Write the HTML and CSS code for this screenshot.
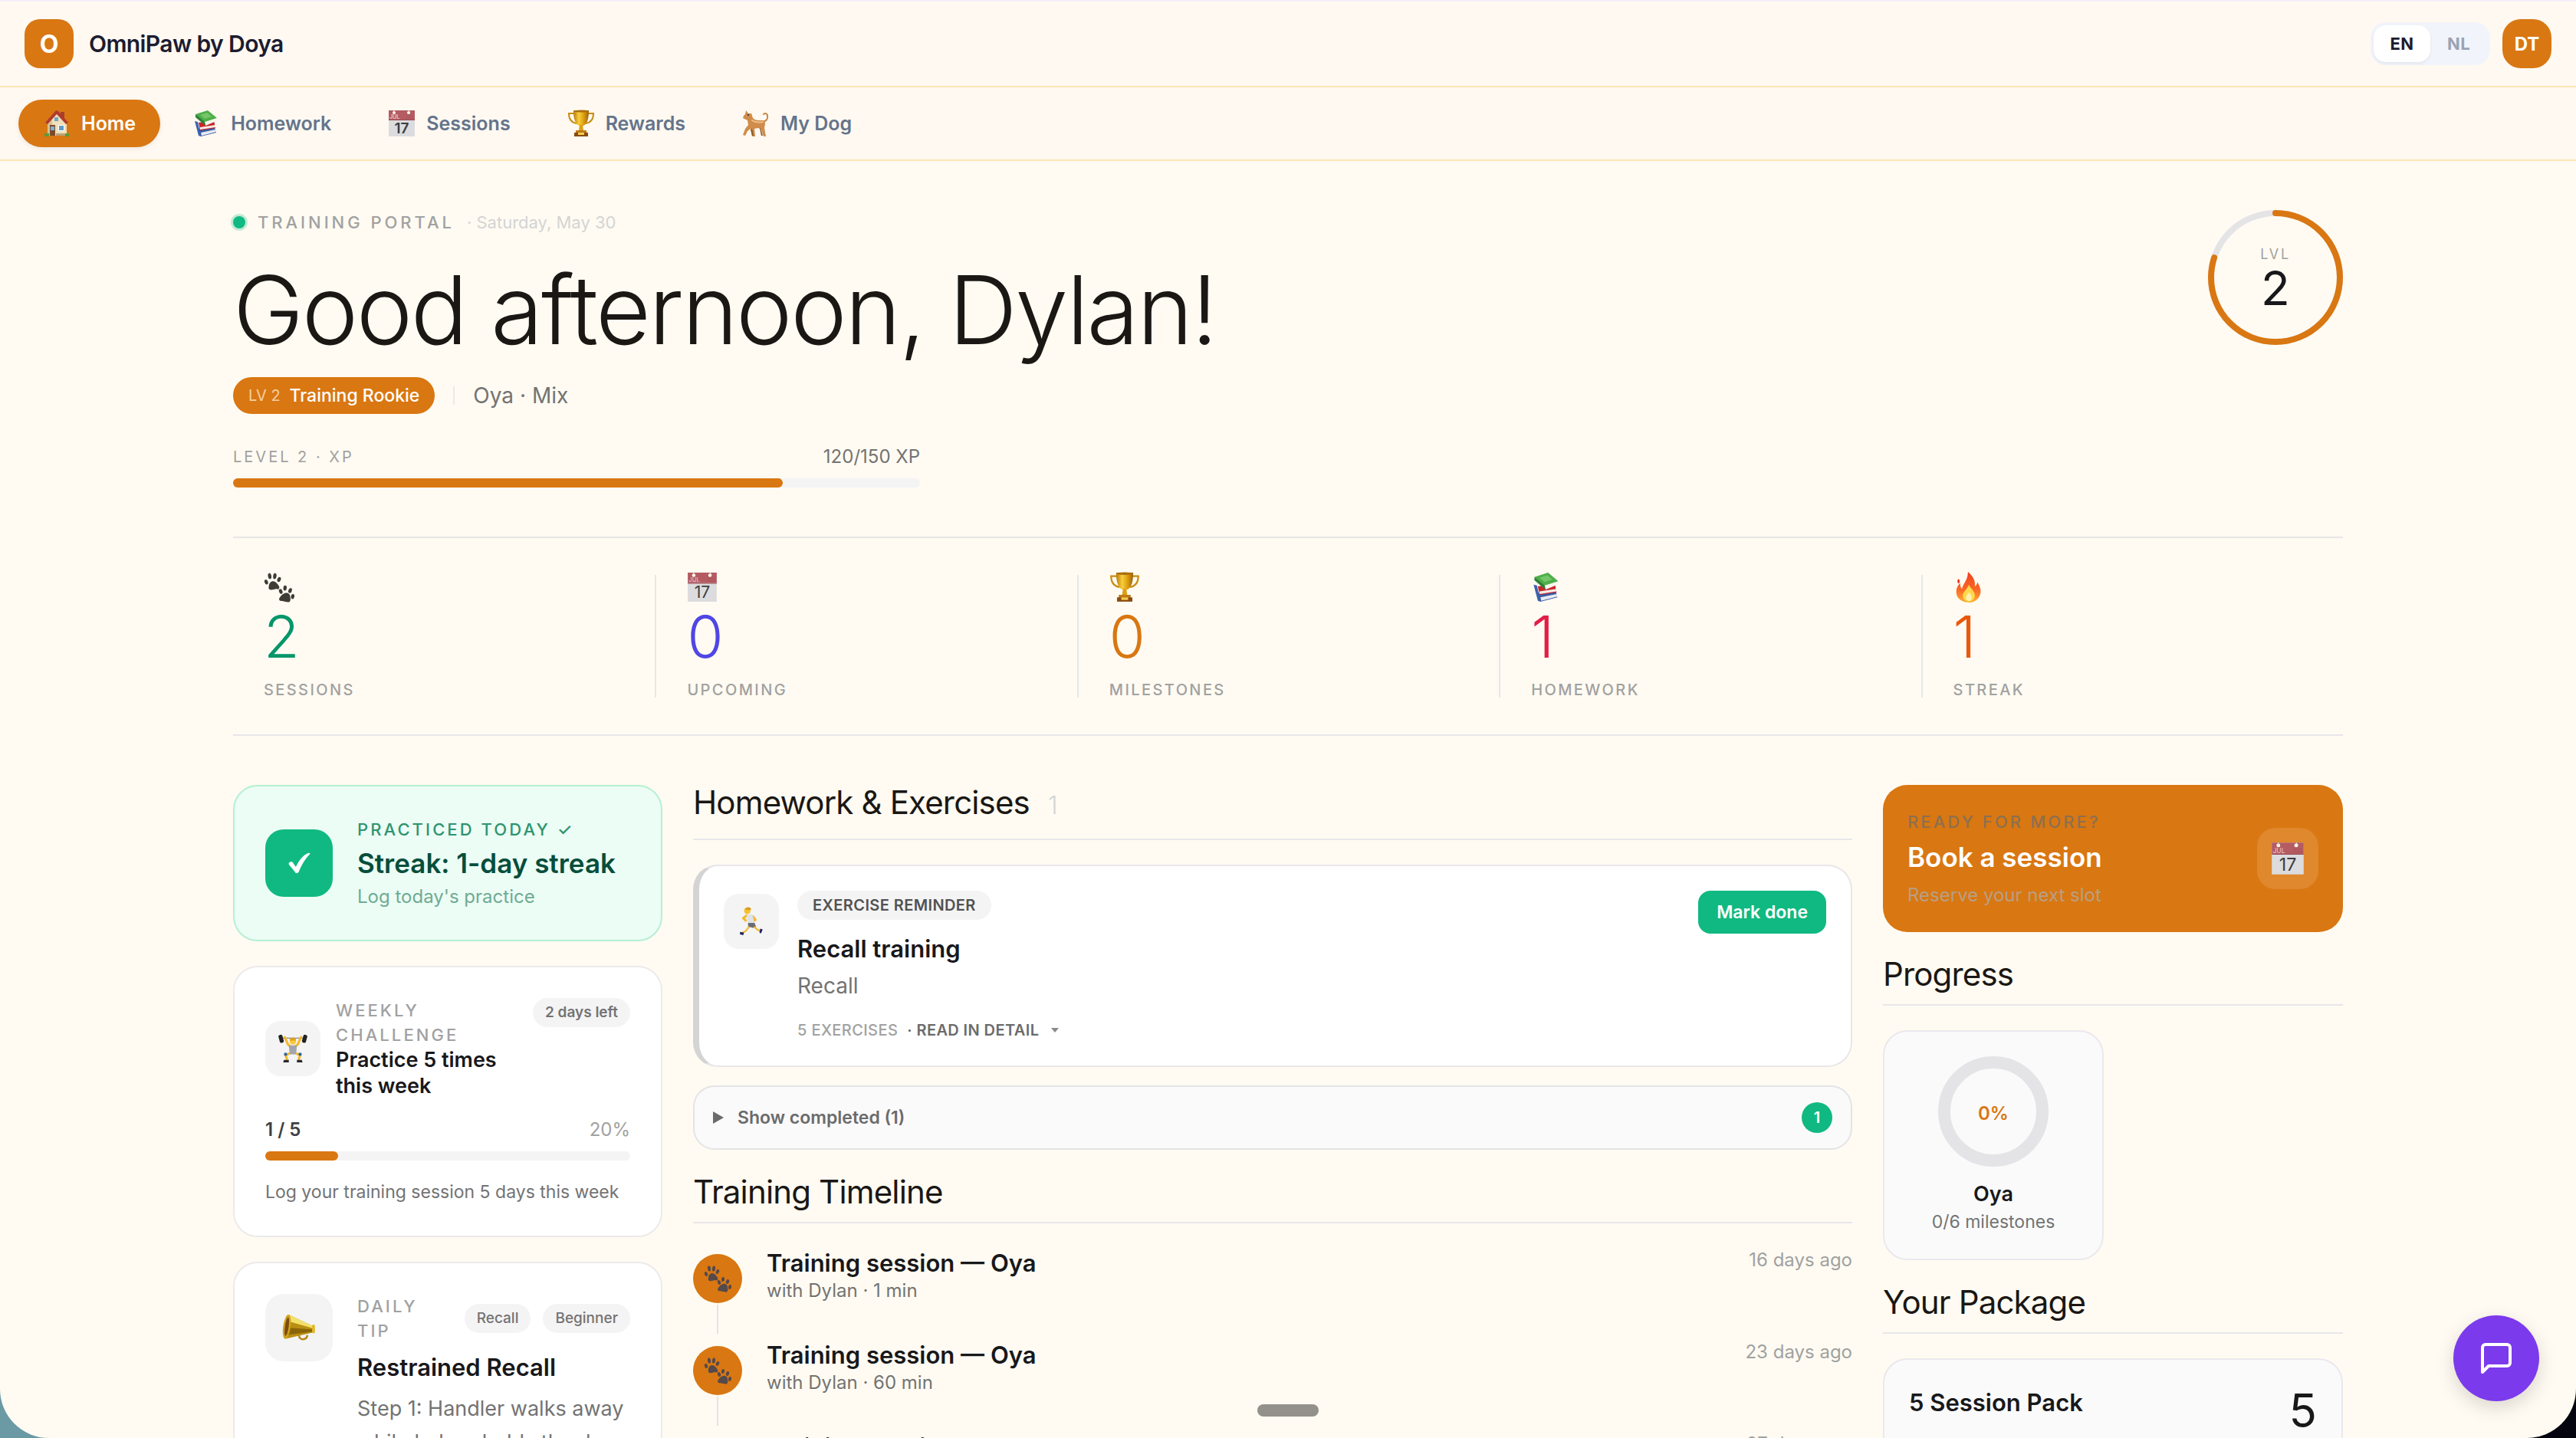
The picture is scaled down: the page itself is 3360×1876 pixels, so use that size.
FILE: index.html
```html
<!DOCTYPE html>
<html lang="en">
<head>
    <meta charset="UTF-8">
    <meta name="viewport" content="width=device-width, initial-scale=1.0">
    <title>OmniPaw by Doya</title>
    <link rel="stylesheet" href="styles.css">
</head>
<body>

    <!-- Icon set -->
    <svg class="icon-defs" aria-hidden="true">
        <defs>
            <linearGradient id="gold" x1="0" x2="1" y1="0" y2="0">
                <stop offset="0" stop-color="#b8790a"/>
                <stop offset=".35" stop-color="#f7cf3c"/>
                <stop offset=".65" stop-color="#e0a012"/>
                <stop offset="1" stop-color="#9c6206"/>
            </linearGradient>
            <linearGradient id="flame" x1="0" x2="0" y1="0" y2="1">
                <stop offset="0" stop-color="#f0401f"/>
                <stop offset=".6" stop-color="#fb6a26"/>
                <stop offset="1" stop-color="#ffb02e"/>
            </linearGradient>
        </defs>
        <symbol id="i-house" viewBox="0 0 36 36">
            <path d="M23 3h5v9h-5z" fill="#a5402f"/>
            <path d="M6 16 18 4l13 13v17H6z" fill="#f0dfb8"/>
            <path d="M6 16 12 10v24H6z" fill="#d9c193"/>
            <path d="M17 1 3 17l3 2L18 6l12 13 3-2L20 2z" fill="#b23a2c"/>
            <path d="M9 20h7v14H9z" fill="#7a4a2c"/>
            <path d="M10 22h5v5h-5z" fill="#7fb0cf"/>
            <path d="M20 20h8v8h-8z" fill="#fff"/>
            <path d="M21 21h6v6h-6z" fill="#5f9bc6"/>
            <path d="M15 10h5v5h-5z" fill="#6fa3c7"/>
            <path d="M2 31h6v4H2zM29 31h5v4h-5z" fill="#5c9a3b"/>
            <path d="M17 31h12v3H17z" fill="#b9a27b"/>
        </symbol>
        <symbol id="i-books" viewBox="0 0 36 36">
            <path d="M6 25 29 23l2 7-20 5z" fill="#3b5ba3"/>
            <path d="M11 30 30 26l1 3-19 5z" fill="#e7eaf2"/>
            <path d="M3 15l4 1 4 19-3-1z" fill="#3c62b0"/>
            <path d="M8 17 28 14l2 10-20 3z" fill="#c9252b"/>
            <path d="M10 23 30 20v3l-20 3z" fill="#f4ece6"/>
            <path d="M4 6 20 1l12 10-16 7z" fill="#4fae4a"/>
            <path d="M16 16 32 11l-1 4-14 6z" fill="#f6f6ee"/>
            <path d="M4 6l12 10 1 5L4 10z" fill="#2c8035"/>
            <path d="M10 7l9-3 6 5-9 3z" fill="#73c768"/>
        </symbol>
        <symbol id="i-calendar" viewBox="0 0 36 36">
            <path d="M1 1h34v34H1z" fill="#dcdcde"/>
            <path d="M1 1h34v12H1z" fill="#b45c62"/>
            <path d="M1 13h34v1H1z" fill="#9b4b52"/>
            <circle cx="8" cy="4" r="2" fill="#fffbf2"/>
            <circle cx="27" cy="4" r="2" fill="#fffbf2"/>
            <path d="M8 1v3M27 1l2 3" stroke="#e7dcd4" stroke-width="1"/>
            <text x="2" y="12" font-size="7" fill="#ecc9c9" font-family="Inter, sans-serif">JUL</text>
            <path d="M24 8h9M24 11h9" stroke="#a04d55" stroke-width="1" stroke-dasharray="1 1"/>
            <text x="18" y="31" font-size="19" text-anchor="middle" fill="#3c3c42" font-family="Inter, sans-serif">17</text>
        </symbol>
        <symbol id="i-trophy" viewBox="0 0 36 36">
            <path d="M9 5H2c0 8 4 12 10 13M27 5h7c0 8-4 12-10 13" fill="none" stroke="#c98c10" stroke-width="2"/>
            <path d="M8 1h20c0 11-2 17-7 20h-6C10 18 8 12 8 1z" fill="url(#gold)"/>
            <ellipse cx="18" cy="2" rx="10" ry="1.500" fill="#a86f08"/>
            <path d="M16 20h4l1 7h-6z" fill="#dba016"/>
            <path d="M11 27h14v4H11z" fill="#c07a16"/>
            <path d="M9 30h18v5H9z" fill="#8a4a12"/>
            <path d="M14 30h8v3h-8z" fill="#f3cd52"/>
        </symbol>
        <symbol id="i-dog" viewBox="0 0 36 36">
            <path d="M26 16c5 0 8-4 7-8 0-3-4-4-5-2" fill="none" stroke="#c98748" stroke-width="2" stroke-linecap="round"/>
            <path d="M5 1l3 4h4l2 6c2 2 4 3 8 3h4c3 0 4 2 4 5l-1 5 2 11h-3l-3-9-4-2-5 1 1 10h-4l-2-10-4 3-3 6-3-1 3-8 4-5-1-6-6-3 1-3 2-2z" fill="#cf8c4a"/>
            <path d="M13 14c4 3 9 3 14 2" fill="none" stroke="#efbf87" stroke-width="2" stroke-linecap="round"/>
            <circle cx="8" cy="7" r="1" fill="#33241a"/>
            <path d="M24 24l3 10h-2l-2-9z" fill="#8f5a2a"/>
            <path d="M13 25l2 9h-2l-2-8z" fill="#8f5a2a"/>
        </symbol>
        <symbol id="i-paws" viewBox="0 0 36 36">
            <g fill="currentColor">
                <path d="M11 11c3 0 6 4 7 6 1 3-1 4-3 3-2 0-3 1-5 1-3 1-5-1-4-4 0-3 2-6 5-6z"/>
                <ellipse cx="3" cy="12" rx="2" ry="3" transform="rotate(-20 3 12)"/>
                <ellipse cx="7" cy="5" rx="2" ry="3.500" transform="rotate(-8 7 5)"/>
                <ellipse cx="13" cy="5" rx="2" ry="3.500" transform="rotate(8 13 5)"/>
                <ellipse cx="18" cy="9" rx="2" ry="3" transform="rotate(24 18 9)"/>
                <path d="M25 25c3-1 6 1 6 4 0 2 1 3 0 5-1 3-4 1-6 1-3-1-7 0-7-3 1-3 4-6 7-7z"/>
                <ellipse cx="20" cy="23" rx="2" ry="3" transform="rotate(-20 20 23)"/>
                <ellipse cx="25" cy="19" rx="2" ry="3" transform="rotate(5 25 19)"/>
                <ellipse cx="31" cy="22" rx="2" ry="3" transform="rotate(20 31 22)"/>
                <ellipse cx="34" cy="29" rx="2" ry="3" transform="rotate(10 34 29)"/>
            </g>
        </symbol>
        <symbol id="i-fire" viewBox="0 0 36 36">
            <path d="M17 0c7 6 9 12 8 17 2-1 3-3 3-5 5 8 5 14 1 19-3 3-6 5-11 5S8 34 5 30c-3-6-2-12 3-17 0 3 0 5 2 7 1-6 7-10 7-20z" fill="url(#flame)"/>
            <path d="M6 8c2 2 2 4 0 6-2-2-2-4 0-6z" fill="#f0401f"/>
            <path d="M18 15c2 5 8 8 7 14-1 4-4 6-7 6s-7-2-7-7 5-7 7-13z" fill="#ffd84d"/>
            <path d="M18 24c3 3 4 5 3 8-1 3-5 3-6 0s1-5 3-8z" fill="#fff3b0"/>
        </symbol>
        <symbol id="i-lifter" viewBox="0 0 36 36">
            <path d="M3 5h30" stroke="#77777a" stroke-width="1"/>
            <rect x="1" y="1" width="5" height="10" rx="2" fill="#222" transform="rotate(-15 3 6)"/>
            <rect x="30" y="1" width="5" height="10" rx="2" fill="#222" transform="rotate(15 33 6)"/>
            <path d="M8 4l4 9 4 3M28 4l-4 9-4 3" fill="none" stroke="#f2b92e" stroke-width="3" stroke-linecap="round" stroke-linejoin="round"/>
            <circle cx="18" cy="9" r="4" fill="#fbc93d"/>
            <path d="M14 8c0-5 8-5 8 0z" fill="#e0a11c"/>
            <path d="M13 14h10l-1 11h-8z" fill="#a3a5ab"/>
            <path d="M14 24l-5 2 2 6M22 24l5 2-2 6" fill="none" stroke="#f2b92e" stroke-width="3" stroke-linejoin="round"/>
            <circle cx="9" cy="25" r="2" fill="#2d63a6"/>
            <circle cx="27" cy="25" r="2" fill="#2d63a6"/>
            <path d="M7 32h6v3H6zM23 32h6l1 3h-7z" fill="#2a2a2c"/>
        </symbol>
        <symbol id="i-megaphone" viewBox="0 0 36 36">
            <path d="M18 26c0 6 8 6 9 0" fill="none" stroke="#b98412" stroke-width="2"/>
            <path d="M7 4 34 17v6L3 30z" fill="#b98f12"/>
            <path d="M7 4 34 17v2L6 11z" fill="#f3e06a"/>
            <path d="M5 18l29 2v2L4 26z" fill="#8b6508"/>
            <ellipse cx="5" cy="17" rx="4" ry="13" fill="#d0a51c" transform="rotate(8 5 17)"/>
            <ellipse cx="5" cy="17" rx="2" ry="10" fill="#7c4b10" transform="rotate(8 5 17)"/>
            <rect x="32" y="15" width="3" height="9" rx="1" fill="#e2b927"/>
        </symbol>
        <symbol id="i-runner" viewBox="0 0 36 36">
            <circle cx="13" cy="5" r="4" fill="#f7c02f"/>
            <path d="M10 3c2-4 7-3 8 0l-2 1z" fill="#d99a1c"/>
            <path d="M12 11l-4 3 3 3M20 12l3 4-4 3" fill="none" stroke="#f2b92e" stroke-width="3" stroke-linecap="round" stroke-linejoin="round"/>
            <path d="M12 10l7-1 3 11-8 1z" fill="#dfe2e8"/>
            <path d="M14 20h8l2 5-4 1-3-1-3 1z" fill="#6b6d72"/>
            <path d="M15 25l-4 5-4 2M22 25l3 3 4 2" fill="none" stroke="#f2b92e" stroke-width="2" stroke-linecap="round"/>
            <path d="M4 31l5 1-1 3-4-1zM28 32l1-5 3 1-2 5z" fill="#23235c"/>
        </symbol>
        <symbol id="i-check" viewBox="0 0 36 36">
            <path d="M2 18c2-3 6-3 7 0l4 6C18 14 24 5 33 2c2 0 3 1 2 2-7 7-13 17-17 27-2 4-5 4-7 0L2 20z" fill="#fff"/>
        </symbol>
        <symbol id="i-chat" viewBox="0 0 24 24">
            <path d="M21 15a2 2 0 0 1-2 2H7l-4 4V5a2 2 0 0 1 2-2h14a2 2 0 0 1 2 2z" fill="none" stroke="#fff" stroke-width="2" stroke-linecap="round" stroke-linejoin="round"/>
        </symbol>
    </svg>

    <div class="screen">

        <header class="topbar">
            <a class="brand" href="#">
                <span class="brand-logo">O</span>
                <span class="brand-name">OmniPaw by Doya</span>
            </a>
            <div class="topbar-right">
                <div class="lang-switch">
                    <button type="button" class="lang active">EN</button>
                    <button type="button" class="lang">NL</button>
                </div>
                <button type="button" class="avatar">DT</button>
            </div>
        </header>

        <nav class="tabs">
            <a class="tab active" href="#"><svg class="icon"><use href="#i-house"/></svg>Home</a>
            <a class="tab" href="#"><svg class="icon"><use href="#i-books"/></svg>Homework</a>
            <a class="tab" href="#"><svg class="icon"><use href="#i-calendar"/></svg>Sessions</a>
            <a class="tab" href="#"><svg class="icon"><use href="#i-trophy"/></svg>Rewards</a>
            <a class="tab" href="#"><svg class="icon"><use href="#i-dog"/></svg>My Dog</a>
        </nav>

        <main class="container">

            <section class="hero">
                <div class="hero-text">
                    <div class="hero-eyebrow">
                        <span class="dot"></span>
                        <span class="label">Training Portal</span>
                        <span class="hero-date">· Saturday, May 30</span>
                    </div>
                    <h1>Good afternoon, Dylan!</h1>
                    <div class="hero-meta">
                        <span class="rank"><span class="rank-level">LV 2</span>Training Rookie</span>
                        <span class="meta-divider"></span>
                        <span class="hero-dog">Oya · Mix</span>
                    </div>
                    <div class="xp">
                        <div class="xp-row">
                            <span class="xp-label">Level 2 · XP</span>
                            <span class="xp-value">120/150 XP</span>
                        </div>
                        <div class="bar"><div class="bar-fill" style="width: 80%"></div></div>
                    </div>
                </div>
                <div class="level-ring">
                    <svg viewBox="0 0 176 176">
                        <circle cx="88" cy="88" r="84" fill="none" stroke="#e4e4e7" stroke-width="8"/>
                        <circle cx="88" cy="88" r="84" fill="none" stroke="#d97712" stroke-width="8" stroke-linecap="round" pathLength="100" stroke-dasharray="80 100" transform="rotate(-90 88 88)"/>
                    </svg>
                    <div class="level-text">
                        <span class="level-label">LVL</span>
                        <span class="level-number">2</span>
                    </div>
                </div>
            </section>

            <section class="stats">
                <div class="stat green">
                    <svg class="icon"><use href="#i-paws"/></svg>
                    <strong>2</strong>
                    <span>Sessions</span>
                </div>
                <div class="stat indigo">
                    <svg class="icon"><use href="#i-calendar"/></svg>
                    <strong>0</strong>
                    <span>Upcoming</span>
                </div>
                <div class="stat amber">
                    <svg class="icon"><use href="#i-trophy"/></svg>
                    <strong>0</strong>
                    <span>Milestones</span>
                </div>
                <div class="stat rose">
                    <svg class="icon"><use href="#i-books"/></svg>
                    <strong>1</strong>
                    <span>Homework</span>
                </div>
                <div class="stat orange">
                    <svg class="icon"><use href="#i-fire"/></svg>
                    <strong>1</strong>
                    <span>Streak</span>
                </div>
            </section>

            <div class="columns">

                <!-- Left column -->
                <div class="column">
                    <a class="card streak" href="#">
                        <span class="tile tile-green"><svg class="icon"><use href="#i-check"/></svg></span>
                        <span class="card-text">
                            <span class="label">Practiced today ✓</span>
                            <span class="streak-title">Streak: 1-day streak</span>
                            <span class="streak-sub">Log today's practice</span>
                        </span>
                    </a>

                    <article class="card challenge">
                        <div class="challenge-head">
                            <span class="tile tile-small"><svg class="icon"><use href="#i-lifter"/></svg></span>
                            <div class="card-text">
                                <span class="label">Weekly challenge</span>
                                <h3>Practice 5 times this week</h3>
                            </div>
                            <span class="badge strong">2 days left</span>
                        </div>
                        <div class="challenge-row">
                            <span class="count">1 / 5</span>
                            <span class="percent">20%</span>
                        </div>
                        <div class="bar"><div class="bar-fill" style="width: 20%"></div></div>
                        <p>Log your training session 5 days this week</p>
                    </article>

                    <article class="card tip">
                        <span class="tile"><svg class="icon"><use href="#i-megaphone"/></svg></span>
                        <div class="card-text">
                            <div class="tip-head">
                                <span class="label">Daily tip</span>
                                <span class="badge">Recall</span>
                                <span class="badge">Beginner</span>
                            </div>
                            <h3>Restrained Recall</h3>
                            <p>Step 1: Handler walks away while helper holds the dog.</p>
                        </div>
                    </article>
                </div>

                <!-- Middle column -->
                <div class="column">
                    <section>
                        <div class="section-head roomy">
                            <h2>Homework &amp; Exercises</h2>
                            <span class="head-count">1</span>
                        </div>
                        <article class="exercise">
                            <span class="tile tile-small"><svg class="icon"><use href="#i-runner"/></svg></span>
                            <div class="exercise-body">
                                <span class="exercise-type">Exercise reminder</span>
                                <h3>Recall training</h3>
                                <p>Recall</p>
                                <div class="exercise-foot">
                                    <span>5 exercises</span>
                                    <button type="button" class="read-more">· Read in detail <span class="caret"></span></button>
                                </div>
                            </div>
                            <button type="button" class="done-btn">Mark done</button>
                        </article>
                        <details class="completed">
                            <summary>
                                <span class="arrow"></span>
                                Show completed (1)
                                <span class="completed-count">1</span>
                            </summary>
                        </details>
                    </section>

                    <section>
                        <div class="section-head">
                            <h2>Training Timeline</h2>
                        </div>
                        <ol class="timeline">
                            <li>
                                <div class="rail"><span class="node"><svg class="icon"><use href="#i-paws"/></svg></span></div>
                                <div class="session">
                                    <h3>Training session — Oya</h3>
                                    <p>with Dylan · 1 min</p>
                                </div>
                                <time>16 days ago</time>
                            </li>
                            <li>
                                <div class="rail"><span class="node"><svg class="icon"><use href="#i-paws"/></svg></span></div>
                                <div class="session">
                                    <h3>Training session — Oya</h3>
                                    <p>with Dylan · 60 min</p>
                                </div>
                                <time>23 days ago</time>
                            </li>
                            <li>
                                <div class="rail"><span class="node"><svg class="icon"><use href="#i-paws"/></svg></span></div>
                                <div class="session">
                                    <h3>Training session — Oya</h3>
                                    <p>with Dylan · 60 min</p>
                                </div>
                                <time>27 days ago</time>
                            </li>
                        </ol>
                    </section>
                </div>

                <!-- Right column -->
                <div class="column">
                    <a class="booking" href="#">
                        <span class="card-text">
                            <span class="label">Ready for more?</span>
                            <span class="booking-title">Book a session</span>
                            <span class="booking-sub">Reserve your next slot</span>
                        </span>
                        <span class="tile tile-booking"><svg class="icon"><use href="#i-calendar"/></svg></span>
                    </a>

                    <section>
                        <div class="section-head">
                            <h2>Progress</h2>
                        </div>
                        <div class="progress-grid">
                            <article class="progress-card">
                                <div class="progress-ring">0%</div>
                                <h3>Oya</h3>
                                <p>0/6 milestones</p>
                            </article>
                        </div>
                    </section>

                    <section>
                        <div class="section-head">
                            <h2>Your Package</h2>
                        </div>
                        <article class="package">
                            <h3>5 Session Pack</h3>
                            <span class="package-left">5</span>
                        </article>
                    </section>
                </div>

            </div>
        </main>

        <button type="button" class="chat-btn" aria-label="Open chat"><svg class="icon"><use href="#i-chat"/></svg></button>
        <div class="home-indicator"></div>
    </div>

</body>
</html>
```

FILE: styles.css
```css
* {
    box-sizing: border-box;
}

body {
    margin: 0;
    font-family: Inter, "Liberation Sans", sans-serif;
    font-size: 24px;
    color: #18181b;
    background: linear-gradient(to right, #6b9aa5 50%, #05050f 50%);
}

h1, h2, h3, p, ol {
    margin: 0;
    padding: 0;
}

a {
    color: inherit;
    text-decoration: none;
}

button {
    font-family: inherit;
    border: none;
    padding: 0;
    cursor: pointer;
}

svg {
    display: block;
}

.icon-defs {
    position: absolute;
    width: 0;
    height: 0;
}

.screen {
    position: relative;
    height: 100vh;
    overflow: hidden;
    background-color: #fffbf2;
    border-top: 2px solid #f5effa;
    border-radius: 0 0 64px 64px;
}

.label {
    font-size: 22px;
    line-height: 32px;
    font-weight: 500;
    letter-spacing: 0.18em;
    text-transform: uppercase;
    color: #a1a1a1;
}

.icon {
    flex-shrink: 0;
    width: 36px;
    height: 36px;
}

/* Header */
.topbar {
    display: flex;
    justify-content: space-between;
    align-items: center;
    height: 112px;
    padding: 0 32px;
    background-color: #fff9f1;
    border-bottom: 2px solid #fde6b8;
}

.brand {
    display: flex;
    align-items: center;
    gap: 20px;
}

.brand-logo,
.avatar {
    display: flex;
    align-items: center;
    justify-content: center;
    width: 64px;
    height: 64px;
    border-radius: 20px;
    background-color: #d97712;
    color: #fff;
    font-weight: 700;
}

.brand-logo {
    font-size: 32px;
}

.avatar {
    font-size: 24px;
    border-radius: 24px;
}

.brand-name {
    font-size: 30px;
    font-weight: 600;
    letter-spacing: -0.02em;
    color: #1c1c30;
}

.topbar-right {
    display: flex;
    align-items: center;
    gap: 16px;
}

.lang-switch {
    display: flex;
    padding: 4px;
    border-radius: 20px;
    background-color: #f1f4fa;
}

.lang {
    width: 74px;
    height: 48px;
    border-radius: 16px;
    background: none;
    font-size: 22px;
    font-weight: 700;
    letter-spacing: 0.02em;
    color: #9aa3b5;
}

.lang.active {
    background-color: #fff;
    color: #1c1c30;
    box-shadow: 0 2px 4px rgba(0, 0, 0, 0.06);
}

/* Navigation */
.tabs {
    display: flex;
    align-items: center;
    gap: 10px;
    height: 96px;
    padding: 0 24px;
    background-color: #fff9f1;
    border-bottom: 2px solid #fde6b8;
}

.tab {
    display: flex;
    align-items: center;
    gap: 14px;
    height: 62px;
    padding: 0 32px;
    border-radius: 32px;
    font-size: 25px;
    font-weight: 600;
    color: #64748b;
}

.tab.active {
    background-color: #d97712;
    color: #fff;
    box-shadow: 0 2px 6px rgba(0, 0, 0, 0.08);
}

/* Hero */
.container {
    max-width: 2880px;
    margin: 0 auto;
    padding: 64px 64px 0;
}

.hero {
    display: flex;
    justify-content: space-between;
    align-items: flex-start;
    padding-bottom: 64px;
    border-bottom: 2px solid #e8e6e6;
}

.hero-text {
    flex: 1;
}

.hero-eyebrow {
    display: flex;
    align-items: center;
    gap: 16px;
}

.dot {
    width: 16px;
    height: 16px;
    border-radius: 50%;
    background-color: #10b981;
    box-shadow: 0 0 0 3px rgba(16, 185, 129, 0.25);
}

.hero-date {
    font-size: 22px;
    color: #d4d4d4;
}

h1 {
    margin-top: 34px;
    font-size: 124px;
    line-height: 128px;
    font-weight: 300;
    letter-spacing: -0.02em;
    color: #1a1714;
}

.hero-meta {
    display: flex;
    align-items: center;
    gap: 24px;
    margin-top: 24px;
    color: #737373;
}

.rank {
    display: flex;
    align-items: center;
    gap: 12px;
    height: 48px;
    padding: 0 20px;
    border-radius: 24px;
    background-color: #d97712;
    color: #fff;
    font-size: 23px;
    font-weight: 500;
}

.rank-level {
    font-size: 20px;
    font-weight: 400;
    color: #f3cfa3;
}

.meta-divider {
    width: 2px;
    height: 24px;
    background-color: #ece9e6;
}

.hero-dog {
    font-size: 28px;
}

.xp {
    width: 896px;
    max-width: 100%;
    margin-top: 40px;
}

.xp-row {
    display: flex;
    justify-content: space-between;
    align-items: center;
    margin-bottom: 12px;
    line-height: 32px;
}

.xp-label {
    font-size: 20px;
    letter-spacing: 0.15em;
    text-transform: uppercase;
    color: #a1a1a1;
}

.xp-value {
    color: #737373;
}

.bar {
    height: 12px;
    border-radius: 6px;
    background-color: #f4f4f5;
}

.bar-fill {
    height: 100%;
    border-radius: 6px;
    background-color: #d97712;
}

.level-ring {
    position: relative;
    width: 176px;
    height: 176px;
}

.level-text {
    position: absolute;
    inset: 0;
    display: flex;
    flex-direction: column;
    align-items: center;
    justify-content: center;
    padding-top: 4px;
}

.level-label {
    font-size: 18px;
    line-height: 24px;
    letter-spacing: 0.15em;
    color: #a1a1a1;
}

.level-number {
    font-size: 62px;
    line-height: 64px;
}

/* Stats */
.stats {
    display: grid;
    grid-template-columns: repeat(5, 1fr);
    padding: 48px 0;
    border-bottom: 2px solid #e8e6ea;
}

.stat {
    display: flex;
    flex-direction: column;
    height: 160px;
    padding-left: 40px;
    border-left: 2px solid #e6e6ea;
}

.stat:first-child {
    border-left: none;
}

.stat .icon {
    width: 40px;
    height: 40px;
    margin-top: -4px;
    color: #3f3b37;
}

.stat strong {
    margin-top: 8px;
    font-size: 76px;
    line-height: 72px;
    font-weight: 300;
}

.stat span {
    margin-top: 20px;
    font-size: 20px;
    line-height: 28px;
    font-weight: 500;
    letter-spacing: 0.12em;
    text-transform: uppercase;
    color: #a1a1a1;
}

.stat.green { color: #059669; }
.stat.indigo { color: #4f46e5; }
.stat.amber { color: #d97712; }
.stat.rose { color: #e11d48; }
.stat.orange { color: #ea580c; }

/* Columns */
.columns {
    display: grid;
    grid-template-columns: 560px 1fr 600px;
    gap: 40px;
    padding-top: 64px;
}

.column {
    display: flex;
    flex-direction: column;
    gap: 32px;
    min-width: 0;
}

.card {
    padding: 40px;
    background-color: #fff;
    border: 2px solid #ebebea;
    border-radius: 32px;
}

.card-text {
    display: flex;
    flex-direction: column;
    flex: 1;
    min-width: 0;
}

.card-text .label {
    letter-spacing: 0.14em;
}

.tile {
    display: flex;
    flex-shrink: 0;
    align-items: center;
    justify-content: center;
    width: 88px;
    height: 88px;
    border-radius: 24px;
    background-color: #f4f4f5;
}

.tile .icon {
    width: 44px;
    height: 44px;
}

.tile-small {
    width: 72px;
    height: 72px;
    border-radius: 20px;
}

.tile-small .icon {
    width: 38px;
    height: 38px;
}

.badge {
    padding: 0 16px;
    border-radius: 20px;
    background-color: #f4f4f5;
    font-size: 19px;
    line-height: 38px;
    font-weight: 500;
    white-space: nowrap;
    color: #737373;
}

.badge.strong {
    font-weight: 600;
}

/* Streak */
.streak {
    display: flex;
    align-items: center;
    gap: 32px;
    background-color: #ecfdf5;
    border-color: #b5f0d4;
}

.tile-green {
    background-color: #10b981;
}

.tile-green .icon {
    width: 30px;
    height: 30px;
}

.streak .label {
    color: #2f9470;
}

.streak-title {
    font-size: 35px;
    line-height: 56px;
    font-weight: 600;
    color: #064e3b;
}

.streak-sub {
    line-height: 32px;
    color: #6fab93;
}

/* Weekly challenge */
.challenge-head {
    display: flex;
    align-items: center;
    gap: 20px;
}

.challenge-head .badge {
    align-self: flex-start;
}

.challenge h3 {
    font-size: 27px;
    line-height: 34px;
    font-weight: 600;
}

.challenge-row {
    display: flex;
    justify-content: space-between;
    margin: 24px 0 12px;
    line-height: 32px;
}

.count {
    font-weight: 600;
    color: #3f3f46;
}

.percent {
    color: #a1a1a1;
}

.challenge p {
    margin-top: 24px;
    font-size: 23px;
    line-height: 34px;
    color: #737373;
}

/* Daily tip */
.tip {
    display: flex;
    align-items: flex-start;
    gap: 32px;
}

.tip-head {
    display: flex;
    align-items: center;
    gap: 16px;
}

.tip-head .label {
    flex: 1;
}

.tip h3 {
    margin-top: 12px;
    font-size: 31px;
    line-height: 40px;
    font-weight: 600;
}

.tip p {
    margin-top: 12px;
    font-size: 27px;
    line-height: 44px;
    color: #737373;
}

/* Section headings */
.section-head {
    display: flex;
    align-items: baseline;
    gap: 24px;
    margin-bottom: 32px;
    padding-bottom: 16px;
    border-bottom: 2px solid #e8e6ea;
}

.section-head.roomy {
    padding-bottom: 24px;
}

h2 {
    font-size: 42px;
    line-height: 46px;
    font-weight: 400;
    letter-spacing: -0.02em;
    color: #1a1714;
}

.head-count {
    font-size: 32px;
    line-height: 32px;
    font-weight: 300;
    color: #d4d4d4;
}

/* Homework */
.exercise {
    display: flex;
    align-items: flex-start;
    gap: 24px;
    margin-bottom: 24px;
    padding: 32px;
    background-color: #fff;
    border: 2px solid #e8e6ea;
    border-left: 8px solid #d4d4d4;
    border-radius: 32px;
}

.exercise .tile {
    margin-top: 4px;
}

.exercise-body {
    display: flex;
    flex-direction: column;
    align-items: flex-start;
    flex: 1;
}

.exercise-type {
    padding: 0 20px;
    border-radius: 20px;
    background-color: #f4f4f5;
    font-size: 20px;
    line-height: 38px;
    font-weight: 600;
    letter-spacing: 0.02em;
    text-transform: uppercase;
    color: #525252;
}

.exercise h3 {
    margin-top: 18px;
    font-size: 31px;
    line-height: 40px;
    font-weight: 600;
}

.exercise p {
    margin-top: 8px;
    font-size: 28px;
    line-height: 40px;
    color: #737373;
}

.exercise-foot {
    display: flex;
    align-items: center;
    gap: 12px;
    margin-top: 24px;
    font-size: 20px;
    line-height: 28px;
    font-weight: 500;
    letter-spacing: 0.02em;
    text-transform: uppercase;
    color: #a1a1a1;
}

.read-more {
    display: flex;
    align-items: center;
    background: none;
    font-size: 20px;
    font-weight: 600;
    letter-spacing: 0.02em;
    text-transform: uppercase;
    color: #6b6b6b;
}

.caret {
    margin-left: 16px;
    border: 5px solid transparent;
    border-top: 6px solid #8a8a8a;
    border-bottom: none;
}

.done-btn {
    height: 56px;
    padding: 0 24px;
    border-radius: 16px;
    background-color: #10b981;
    color: #fff;
    font-size: 23px;
    font-weight: 600;
}

.completed {
    background-color: #fafafa;
    border: 2px solid #e4e4e7;
    border-radius: 28px;
}

.completed summary {
    display: flex;
    align-items: center;
    gap: 18px;
    height: 80px;
    padding: 0 24px;
    list-style: none;
    font-size: 23px;
    font-weight: 600;
    color: #6b6b6b;
    cursor: pointer;
}

.arrow {
    border: 8px solid transparent;
    border-left: 14px solid #6b6b6b;
    border-right: none;
}

.completed-count {
    width: 40px;
    margin-left: auto;
    border-radius: 20px;
    background-color: #10b981;
    color: #fff;
    font-size: 20px;
    line-height: 40px;
    text-align: center;
}

/* Timeline */
.timeline {
    list-style: none;
}

.timeline li {
    display: flex;
    gap: 32px;
    height: 120px;
}

.rail {
    display: flex;
    flex-direction: column;
    align-items: center;
    padding-top: 8px;
}

.rail::after {
    content: "";
    flex: 1;
    width: 2px;
    margin: 2px 0 8px;
    background-color: #e4e4e4;
}

.node {
    display: flex;
    align-items: center;
    justify-content: center;
    width: 64px;
    height: 64px;
    border-radius: 50%;
    background-color: #d97712;
    color: #55494a;
}

.session {
    flex: 1;
}

.session h3 {
    font-size: 31px;
    line-height: 40px;
    font-weight: 600;
}

.session p {
    line-height: 32px;
    color: #737373;
}

.timeline time {
    line-height: 32px;
    color: #a1a1a1;
}

/* Booking */
.booking {
    display: flex;
    align-items: center;
    padding: 32px;
    border-radius: 32px;
    background-color: #d97712;
}

.booking .label {
    color: #8b7050;
}

.booking-title {
    margin: 8px 0 12px;
    font-size: 35px;
    line-height: 44px;
    font-weight: 600;
    color: #fff;
}

.booking-sub {
    line-height: 32px;
    color: #b89f84;
}

.tile-booking {
    width: 80px;
    height: 80px;
    background-color: #df882e;
}

/* Progress */
.progress-grid {
    display: grid;
    grid-template-columns: 1fr 1fr;
    gap: 24px;
}

.progress-card {
    display: flex;
    flex-direction: column;
    align-items: center;
    padding: 32px 16px;
    background-color: #fafafa;
    border: 2px solid #ebe8ee;
    border-radius: 32px;
}

.progress-ring {
    display: flex;
    align-items: center;
    justify-content: center;
    width: 144px;
    height: 144px;
    padding-top: 4px;
    border: 16px solid #e4e4e7;
    border-radius: 50%;
    font-weight: 600;
    color: #d97712;
}

.progress-card h3 {
    margin-top: 16px;
    font-size: 27px;
    line-height: 40px;
    font-weight: 600;
}

.progress-card p {
    font-size: 23px;
    line-height: 32px;
    color: #737373;
}

/* Package */
.package {
    display: flex;
    justify-content: space-between;
    align-items: flex-start;
    height: 200px;
    padding: 36px 32px;
    background-color: #fafafa;
    border: 2px solid #ebe8ee;
    border-radius: 32px;
}

.package h3 {
    font-size: 31px;
    line-height: 40px;
    font-weight: 600;
}

.package-left {
    font-size: 60px;
    line-height: 60px;
}

/* Floating elements */
.chat-btn {
    position: absolute;
    right: 48px;
    bottom: 48px;
    display: flex;
    align-items: center;
    justify-content: center;
    width: 112px;
    height: 112px;
    border-radius: 50%;
    background-color: #7c3aed;
    box-shadow: 0 8px 24px rgba(0, 0, 0, 0.15);
}

.chat-btn .icon {
    width: 48px;
    height: 48px;
}

.home-indicator {
    position: absolute;
    bottom: 28px;
    left: 50%;
    width: 80px;
    height: 16px;
    border-radius: 8px;
    transform: translateX(-50%);
    background-color: #94918c;
}
```
